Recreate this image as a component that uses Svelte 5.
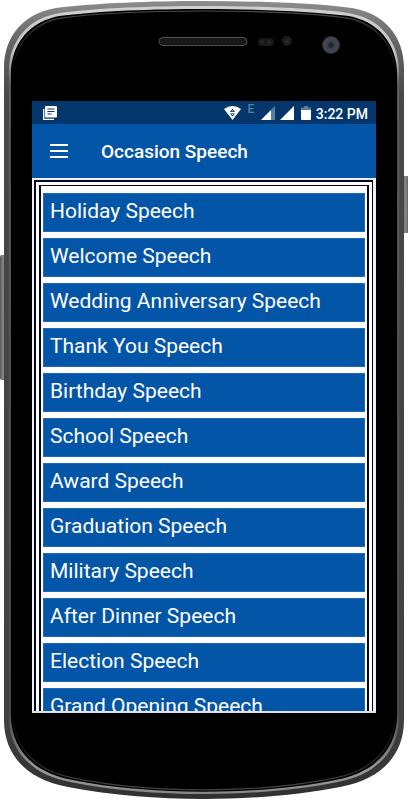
<script>
  const speeches = [
    'Holiday Speech',
    'Welcome Speech',
    'Wedding Anniversary Speech',
    'Thank You Speech',
    'Birthday Speech',
    'School Speech',
    'Award Speech',
    'Graduation Speech',
    'Military Speech',
    'After Dinner Speech',
    'Election Speech',
    'Grand Opening Speech'
  ];
  const holes = Array.from({ length: 21 }, (_, i) => 164 + i * 4);
  const body =
    'M204 1 C258 1 312 3 352 8 C384 13 404 36 404 68 V720 C404 756 380 780 340 787 C300 795 250 799 204 799 C158 799 108 795 68 787 C28 780 4 756 4 720 V68 C4 36 24 13 56 8 C96 3 150 1 204 1 Z';
</script>

<div class="phone">
  <svg class="shell" viewBox="0 0 408 800" preserveAspectRatio="none" aria-hidden="true">
    <defs>
      <linearGradient id="rim" x1="0" y1="0" x2="0" y2="1">
        <stop offset="0" stop-color="#8c8c8c" />
        <stop offset="0.05" stop-color="#666" />
        <stop offset="0.12" stop-color="#484848" />
        <stop offset="0.9" stop-color="#404040" />
        <stop offset="1" stop-color="#303030" />
      </linearGradient>
      <linearGradient id="shine" x1="0" y1="0" x2="0" y2="1">
        <stop offset="0" stop-color="#d0d0d0" />
        <stop offset="0.06" stop-color="#c4c4c4" />
        <stop offset="0.1" stop-color="#606060" />
        <stop offset="0.9" stop-color="#4e4e4e" />
        <stop offset="0.97" stop-color="#999" />
        <stop offset="1" stop-color="#888" />
      </linearGradient>
      <linearGradient id="inner" x1="0" y1="0" x2="0" y2="1">
        <stop offset="0" stop-color="#4a4a4a" />
        <stop offset="0.08" stop-color="#000" />
        <stop offset="0.9" stop-color="#000" />
        <stop offset="1" stop-color="#444" />
      </linearGradient>
      <linearGradient id="key" x1="0" y1="0" x2="1" y2="0">
        <stop offset="0" stop-color="#555" />
        <stop offset="0.5" stop-color="#8a8a8a" />
        <stop offset="1" stop-color="#555" />
      </linearGradient>
      <radialGradient id="lens">
        <stop offset="0" stop-color="#191d24" />
        <stop offset="0.3" stop-color="#2b3038" />
        <stop offset="0.4" stop-color="#3a414b" />
        <stop offset="0.8" stop-color="#414954" />
        <stop offset="1" stop-color="#23282e" />
      </radialGradient>
    </defs>
    <rect x="0" y="255" width="6" height="125" rx="2" fill="url(#key)" />
    <rect x="402" y="176" width="7" height="57" rx="2" fill="url(#key)" />
    <path d={body} fill="url(#rim)" />
    <path d={body} fill="url(#shine)" transform="translate(5 5) scale(.9755 .9875)" />
    <path d={body} fill="#000" transform="translate(7 8) scale(.9657 .981)" />
    <path d={body} fill="none" stroke="url(#inner)" stroke-width="1.2" transform="translate(9 10) scale(.956 .976)" />

    <rect x="159" y="37.500" width="88" height="8" rx="4" fill="#151515" stroke="#515151" />
    {#each holes as x}
      <circle cx={x} cy="41" r="1.300" fill="#000" stroke="#343434" stroke-width=".6" />
    {/each}
    <rect x="258" y="38" width="16" height="8" rx="4" fill="#191919" />
    <circle cx="262" cy="42" r="2" fill="#262626" />
    <circle cx="269" cy="42" r="2" fill="#262626" />
    <circle cx="287" cy="41" r="5" fill="#1c1c1c" />
    <circle cx="287" cy="41" r="2" fill="#292929" />
    <circle cx="331" cy="45" r="9" fill="url(#lens)" />
  </svg>

  <main class="screen">
    <div class="status">
      <svg width="14" height="14" viewBox="0 0 14 14" aria-hidden="true">
        <path d="M.7 3v10.300H11" fill="none" stroke="#fff" stroke-width="1.300" />
        <rect x="2" y="0" width="12" height="11.500" rx="1" fill="#fff" />
        <path d="M4.500 3h7M4.500 5.500h7M4.500 8h4" stroke="#03366b" stroke-width="1.200" />
      </svg>
      <div class="indicators">
        <svg width="17" height="14" viewBox="0 0 17 14" aria-hidden="true">
          <path d="M0 3Q8.500-3 17 3L8.500 14Z" fill="#fff" />
          <path d="M8.500 2.800l2.600 3.200H5.900ZM8.500 10.600L5.900 7.400h5.200Z" fill="#03366b" />
          <path d="M8.500 4.300l1 1h-2ZM8.500 9.100l1-1h-2Z" fill="#fff" />
        </svg>
        <span class="edge">E</span>
        <svg width="14" height="14" viewBox="0 0 14 14" aria-hidden="true">
          <path d="M0 14L14 0v14Z" fill="#57809f" />
          <path d="M0 14L10 4v10Z" fill="#fff" />
        </svg>
        <svg width="14" height="14" viewBox="0 0 14 14" aria-hidden="true">
          <path d="M0 14L14 0v14Z" fill="#fff" />
        </svg>
        <svg class="battery" width="10" height="14" viewBox="0 0 10 14" aria-hidden="true">
          <path d="M3 0h4v1.500h3V4H0V1.500h3Z" fill="#57809f" />
          <path d="M0 4h10v9q0 1-1 1H1q-1 0-1-1Z" fill="#fff" />
        </svg>
        <time>3:22 PM</time>
      </div>
    </div>

    <header>
      <button class="menu" aria-label="Open menu">
        <svg width="18" height="14" viewBox="0 0 18 14" aria-hidden="true">
          <path d="M0 1h18M0 7h18M0 13h18" stroke="#fff" stroke-width="2" />
        </svg>
      </button>
      <h1>Occasion Speech</h1>
    </header>

    <div class="viewport">
      <div class="frame">
        <div class="list">
          {#each speeches as speech}
            <button class="item">{speech}</button>
          {/each}
        </div>
      </div>
    </div>
  </main>
</div>

<style>
  :global(body) {
    background: #fff;
  }
  .phone {
    position: relative;
    box-sizing: border-box;
    height: 100vh;
    min-height: 480px;
    padding: 101px 32px 87px;
    display: flex;
    overflow: hidden;
    font-family: Roboto, 'Liberation Sans', sans-serif;
  }
  .shell {
    position: absolute;
    inset: 0;
    width: 100%;
    height: 100%;
  }
  .screen {
    position: relative;
    flex: 1;
    min-width: 0;
    display: flex;
    flex-direction: column;
    background: #0355a7;
    color: #fff;
  }
  .status {
    display: flex;
    align-items: center;
    justify-content: space-between;
    height: 23px;
    padding: 0 8px 0 11px;
    background: #03366b;
  }
  .indicators {
    display: flex;
    align-items: center;
    gap: 5px;
  }
  .edge {
    width: 10px;
    padding-bottom: 8px;
    text-align: center;
    font-size: 12px;
    line-height: 12px;
    font-weight: 500;
    color: #57809f;
  }
  .battery {
    margin-left: 2px;
  }
  time {
    padding-top: 2px;
    font-size: 14px;
    line-height: 20px;
    font-weight: 500;
  }
  header {
    display: flex;
    align-items: center;
    height: 54px;
  }
  .menu {
    display: flex;
    width: 69px;
    padding: 8px 0 8px 18px;
    border: 0;
    background: none;
  }
  h1 {
    margin: 0;
    padding-top: 2px;
    font-size: 19px;
    line-height: 24px;
    font-weight: 500;
  }
  .viewport {
    flex: 1;
    min-height: 0;
    overflow: hidden;
    padding: 2px 3px 0 2px;
    border-bottom: 2px solid #e2dfe8;
    background: #f1eff4;
  }
  .frame {
    padding: 3px;
    border: 2px solid #04061f;
    border-right-width: 1px;
    background: #fff;
  }
  .list {
    display: flex;
    flex-direction: column;
    gap: 6px;
    padding: 7px 2px;
    border: 2px solid #04061f;
    border-top-width: 1px;
  }
  .item {
    flex: none;
    height: 39px;
    padding: 0 6px 3px;
    border: 1px solid #1d69b3;
    background: #0355a7;
    color: #fff;
    font-family: inherit;
    font-size: 21px;
    line-height: 26px;
    text-align: left;
    white-space: nowrap;
  }
</style>
